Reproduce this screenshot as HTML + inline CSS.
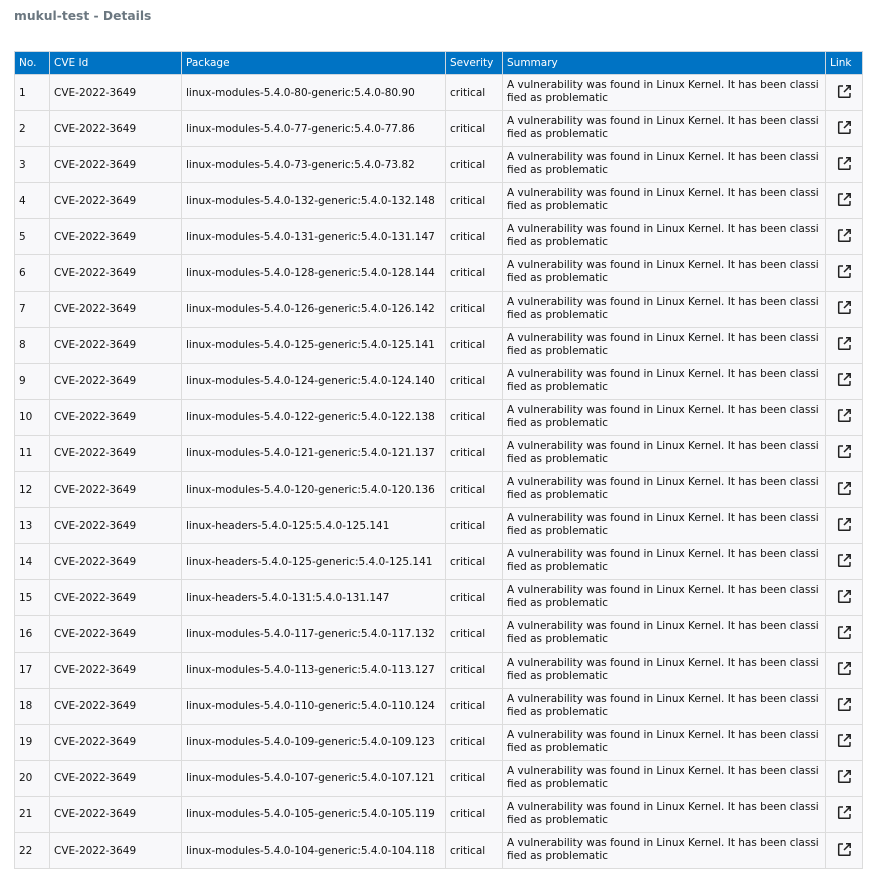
<!DOCTYPE html>
<html><head><meta charset="utf-8"><style>
body{margin:0;background:#fff;font-family:"DejaVu Sans","Liberation Sans",sans-serif;font-size:10.5px;color:#111;}
h1{position:absolute;left:14px;top:9px;margin:0;font-size:12.3px;font-weight:bold;color:#6b7780;}
table{position:absolute;left:14px;top:51px;border-collapse:collapse;width:848px;table-layout:fixed;}
th{background:#0073c4;color:#fff;font-weight:normal;text-align:left;height:22px;padding:0 4px;border:1px solid #cfd6dd;font-size:10.5px;}
td{background:#f8f8fa;border:1px solid #dcdcdc;height:35px;padding:0 4px;vertical-align:middle;white-space:nowrap;overflow:hidden;}
td.s{vertical-align:top;padding-top:4px;line-height:13px;height:31.1px;}
td.l{text-align:center;}
</style></head><body>
<h1>mukul-test - Details</h1>
<table>
<colgroup><col style="width:35px"><col style="width:132px"><col style="width:264px"><col style="width:57px"><col style="width:323px"><col style="width:37px"></colgroup>
<tr><th>No.</th><th>CVE Id</th><th>Package</th><th>Severity</th><th>Summary</th><th>Link</th></tr>
<tbody id="b"></tbody>
</table>
<script>
var p=["linux-modules-5.4.0-80-generic:5.4.0-80.90","linux-modules-5.4.0-77-generic:5.4.0-77.86","linux-modules-5.4.0-73-generic:5.4.0-73.82","linux-modules-5.4.0-132-generic:5.4.0-132.148","linux-modules-5.4.0-131-generic:5.4.0-131.147","linux-modules-5.4.0-128-generic:5.4.0-128.144","linux-modules-5.4.0-126-generic:5.4.0-126.142","linux-modules-5.4.0-125-generic:5.4.0-125.141","linux-modules-5.4.0-124-generic:5.4.0-124.140","linux-modules-5.4.0-122-generic:5.4.0-122.138","linux-modules-5.4.0-121-generic:5.4.0-121.137","linux-modules-5.4.0-120-generic:5.4.0-120.136","linux-headers-5.4.0-125:5.4.0-125.141","linux-headers-5.4.0-125-generic:5.4.0-125.141","linux-headers-5.4.0-131:5.4.0-131.147","linux-modules-5.4.0-117-generic:5.4.0-117.132","linux-modules-5.4.0-113-generic:5.4.0-113.127","linux-modules-5.4.0-110-generic:5.4.0-110.124","linux-modules-5.4.0-109-generic:5.4.0-109.123","linux-modules-5.4.0-107-generic:5.4.0-107.121","linux-modules-5.4.0-105-generic:5.4.0-105.119","linux-modules-5.4.0-104-generic:5.4.0-104.118"];
var ic='<svg width="15" height="15" viewBox="0 0 15 15" fill="none" stroke="#222" stroke-width="1.5"><path d="M6 2H2.5a.8.8 0 0 0-.8.8v9.7a.8.8 0 0 0 .8.8h9.7a.8.8 0 0 0 .8-.8V9"/><path d="M9 1.8h4.2V6M13.2 1.8L7 8"/></svg>';
var h="";p.forEach(function(x,i){h+='<tr><td>'+(i+1)+'</td><td>CVE-2022-3649</td><td>'+x+'</td><td>critical</td><td class="s">A vulnerability was found in Linux Kernel. It has been classi<br>fied as problematic</td><td class="l">'+ic+'</td></tr>';});
document.getElementById("b").innerHTML=h;
</script>
</body></html>
